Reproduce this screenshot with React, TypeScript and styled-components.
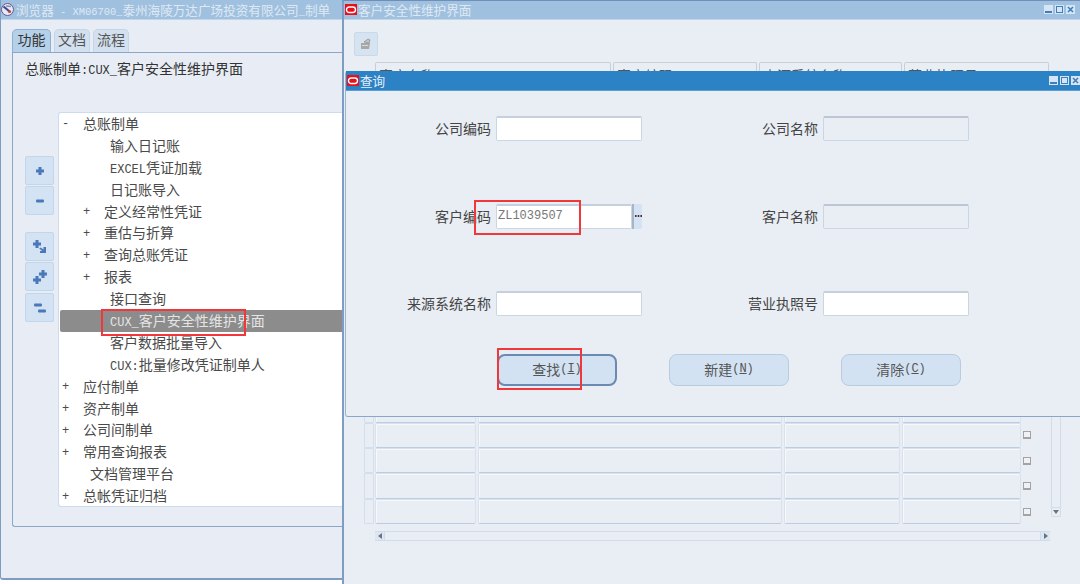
import React from "react";
import styled, { createGlobalStyle } from "styled-components";

const Global = createGlobalStyle`
  html, body { margin: 0; padding: 0; background: #fff; overflow: hidden; }
  * { box-sizing: border-box; }
  body { font-family: "Noto Sans CJK SC", "Liberation Sans", sans-serif; font-size: 14px; color: #444; }
`;

const Desktop = styled.div`
  position: relative;
  width: 1080px;
  height: 584px;
  overflow: hidden;
  background: #fff;
`;

const LatinSpan = styled.span<{ $small?: boolean }>`
  font-family: "Liberation Mono", monospace;
  font-size: ${(p) => (p.$small ? 10.4 : 12)}px;
  line-height: 1;
`;

const Mixed = ({ text, small }: { text: string; small?: boolean }) => (
  <>
    {text.split(/([\x20-\x7e]+)/).map((p, i) =>
      /^[\x20-\x7e]+$/.test(p) ? (
        <LatinSpan key={i} $small={small}>{p}</LatinSpan>
      ) : p ? (
        <span key={i}>{p}</span>
      ) : null
    )}
  </>
);

const LeftWindow = styled.section`
  position: absolute;
  left: 0;
  top: 0;
  width: 344px;
  height: 580px;
  background: #e8edf5;
  border-left: 1px solid #7f9cc3;
  border-bottom: 2px solid #7f9cc3;
  border-bottom-left-radius: 3px;
  display: flex;
  flex-direction: column;
`;

const InactiveBar = styled.header`
  height: 20px;
  flex: none;
  display: flex;
  align-items: center;
  background: #9fc0df;
  border-bottom: 1px solid #c2d6ea;
  color: #dfe9f3;
  font-size: 12.6px;
  line-height: 17px;
  padding-bottom: 1px;
  white-space: nowrap;
`;

const LeftTitle = styled.span`
  margin-left: 2px;
  width: 320px;
`;

const Tabs = styled.nav`
  display: flex;
  gap: 3px;
  margin: 9px 0 0 11px;
  height: 24px;
  flex: none;
`;

const Tab = styled.div<{ $active?: boolean }>`
  width: ${(p) => (p.$active ? 39 : 36)}px;
  padding-bottom: 4px;
  display: flex;
  align-items: center;
  justify-content: center;
  background: ${(p) => (p.$active ? "#b5d0e9" : "#d2e0ef")};
  border: 1px solid ${(p) => (p.$active ? "#8fb0d2" : "#c5d5e6")};
  border-bottom: none;
  border-radius: 5px 5px 0 0;
  color: ${(p) => (p.$active ? "#333" : "#555")};
  line-height: 19px;
`;

const TabPanel = styled.div`
  margin: -1px 0 0 11px;
  height: 475px;
  flex: none;
  border: 1px solid #8ba6c9;
  border-right: none;
  border-radius: 0 0 0 3px;
  padding: 5px 0 0 12px;
`;

const PanelHeading = styled.div`
  height: 20px;
  line-height: 20px;
  color: #333;
`;

const TreeArea = styled.div`
  display: flex;
  margin-top: 34px;
`;

const SideButtons = styled.div`
  width: 33px;
  flex: none;
  padding-top: 44px;
  display: flex;
  flex-direction: column;
  gap: 1px;
`;

const SideButton = styled.div<{ $gapTop?: number }>`
  width: 29px;
  height: 29px;
  margin-top: ${(p) => p.$gapTop ?? 0}px;
  display: flex;
  align-items: center;
  justify-content: center;
  background: #d3e3f3;
  border: 1px solid #c3d5e8;
  border-radius: 2px;
`;

const Tree = styled.div`
  width: 285px;
  height: 395px;
  background: #fff;
  border: 1px solid #ccdcec;
  border-right: none;
  border-radius: 3px 0 0 3px;
`;

const TreeRow = styled.div<{ $selected?: boolean }>`
  height: 21.9px;
  padding-bottom: 2px;
  margin-left: ${(p) => (p.$selected ? 1 : 0)}px;
  display: flex;
  align-items: center;
  white-space: nowrap;
  line-height: 20px;
  background: ${(p) => (p.$selected ? "#8c8c8c" : "transparent")};
  color: ${(p) => (p.$selected ? "#e4e4e4" : "#4a4a4a")};
  border-radius: ${(p) => (p.$selected ? "2px 0 0 2px" : "0")};
`;

const Marker = styled.span<{ $level: number }>`
  width: 21px;
  margin-left: ${(p) => (p.$level === 2 ? 24 : 3)}px;
  padding-top: 3px;
  flex: none;
  font-family: "Liberation Mono", monospace;
  font-size: 12px;
`;

const TreeLabel = styled.span<{ $pad: number }>`
  padding-left: ${(p) => p.$pad}px;
`;

const RightWindow = styled.section`
  position: absolute;
  left: 342px;
  top: 0;
  width: 738px;
  height: 584px;
  background: #e9eef5;
  border-left: 2px solid #7f9cc3;
  border-top: 1px solid #6f8fb8;
  display: flex;
  flex-direction: column;
`;

const RightBar = styled(InactiveBar)`
  height: 19px;
  padding-right: 5px;
`;

const RightTitle = styled.span`
  margin-left: 1px;
  flex: 1;
`;

const WinControls = styled.div<{ $gap: number }>`
  display: flex;
  gap: ${(p) => p.$gap}px;
`;

const WinControl = styled.svg`
  width: 9px;
  height: 9px;
  display: block;
`;

const OracleMark = styled.svg`
  width: 12px;
  height: 11px;
  flex: none;
  display: block;
  margin-left: 1px;
`;

const LogoMark = styled.svg`
  width: 13px;
  height: 13px;
  flex: none;
  display: block;
`;

const Toolbar = styled.div`
  margin: 12px 0 0 10px;
  width: 24px;
  height: 24px;
  flex: none;
  display: flex;
  align-items: center;
  justify-content: center;
  background: #d6e4f2;
  border: 1px solid #c9d9e9;
  border-radius: 2px;
`;

const HeaderRow = styled.div`
  display: flex;
  gap: 2px;
  margin: 6px 0 0 31px;
  height: 30px;
  flex: none;
`;

const HeaderCell = styled.div<{ $w: number }>`
  width: ${(p) => p.$w}px;
  flex: none;
  border: 1px solid #c9cfd8;
  border-bottom: none;
  border-radius: 2px 2px 0 0;
  padding: 2px 0 0 3px;
  line-height: 20px;
  color: #555;
`;

const TableWrap = styled.div`
  display: flex;
  margin-left: 20px;
  margin-top: 0.6px;
  flex: none;
`;

const TableBody = styled.div`
  width: 668px;
  flex: none;
  display: flex;
  flex-direction: column;
`;

const TableRow = styled.div`
  height: 25.4px;
  display: flex;
  gap: 2px;
  align-items: stretch;
`;

const RowSelector = styled.div`
  width: 10px;
  flex: none;
  margin-right: -1px;
  background: #e9eef5;
  border: 1px solid #d3dfec;
  border-radius: 1px;
`;

const DataCell = styled.div<{ $w: number }>`
  width: ${(p) => p.$w}px;
  flex: none;
  background: #e9eef5;
  border: 1px solid #d8e2ee;
  border-bottom: 1px solid #bccde2;
  border-radius: 2px;
  box-shadow: inset 1px 1px 0 #f6f8fb;
`;

const CheckCell = styled.div`
  width: 8px;
  flex: none;
  display: flex;
  align-items: center;
`;

const Check = styled.div`
  width: 8px;
  height: 8px;
  border: 1px solid #a3a3a3;
  border-bottom-width: 2px;
  background: #eef1f6;
`;

const VScroll = styled.div`
  width: 10px;
  margin-left: 19px;
  height: 447px;
  margin-top: -23px;
  border: 1px solid #cfdcea;
  border-top: none;
  border-radius: 10px 10px 5px 5px;
  display: flex;
  flex-direction: column;
  justify-content: flex-end;
  flex: none;
`;

const ScrollEnd = styled.div`
  height: 9px;
  border-top: 1px solid #cfdcea;
  display: flex;
  align-items: center;
  justify-content: center;
  font-size: 0;
`;

const HScroll = styled.div`
  margin: 7px 0 0 31px;
  width: 675px;
  height: 10px;
  flex: none;
  display: flex;
  justify-content: space-between;
  background: #e9eef5;
  border: 1px solid #cfdcea;
  border-left: none;
  border-right: none;
`;

const ArrowBox = styled.div<{ $side: "l" | "r" }>`
  width: 10px;
  display: flex;
  align-items: center;
  justify-content: center;
  background: #dde7f2;
  border-${(p) => (p.$side === "l" ? "right" : "left")}: 1px solid #cfdcea;
`;

const Dialog = styled.section`
  position: absolute;
  left: 345px;
  top: 71px;
  width: 735px;
  height: 346px;
  background: #e9eef5;
  border-left: 1px solid #9db4d2;
  border-bottom: 1px solid #8ba6c9;
  border-radius: 3px 0 0 3px;
  display: flex;
  flex-direction: column;
`;

const DialogBar = styled.header`
  height: 20px;
  flex: none;
  background: #2b82c5;
  border-bottom: 1px solid #5b9cd1;
  display: flex;
  align-items: center;
  color: #e6eff8;
  font-size: 12.6px;
  line-height: 17px;
`;

const DialogTitle = styled.span`
  margin-left: 1px;
  flex: 1;
`;

const Form = styled.div`
  display: grid;
  grid-template-columns: 145px 146px 171px 146px;
  grid-auto-rows: 25px;
  column-gap: 5px;
  row-gap: 62.5px;
  margin-top: 25px;
  align-items: center;
`;

const FormLabel = styled.label`
  text-align: right;
  line-height: 25px;
  color: #444;
  white-space: nowrap;
`;

const Field = styled.div<{ $disabled?: boolean }>`
  height: 25px;
  background: ${(p) => (p.$disabled ? "#e9eef5" : "#fff")};
  border: 1px solid #c8d6e6;
  border-top: 2px solid ${(p) => (p.$disabled ? "#bcc6d4" : "#c6cfdc")};
  border-radius: 2px;
  padding-left: 1px;
  line-height: 20px;
  color: #777;
  display: flex;
  align-items: center;
`;

const FieldText = styled.span`
  font-family: "Liberation Mono", monospace;
  font-size: 12px;
  margin-top: -2px;
`;

const LovGroup = styled.div`
  display: flex;
`;

const LovField = styled(Field)`
  width: 136px;
`;

const LovButton = styled.div`
  width: 10px;
  height: 25px;
  background: #d3e3f3;
  border-left: 2px solid #aab5c4;
  border-radius: 0 2px 2px 0;
  display: flex;
  align-items: center;
  justify-content: center;
`;

const ButtonRow = styled.div`
  display: flex;
  gap: 52px;
  margin: 38px 0 0 151px;
`;

const ActionButton = styled.div<{ $default?: boolean }>`
  width: 120px;
  height: 32px;
  padding-bottom: 3px;
  display: flex;
  align-items: center;
  justify-content: center;
  background: #d2e2f2;
  border: ${(p) => (p.$default ? "2px solid #6b8ab2" : "1px solid #b9cbe0")};
  border-radius: 8px;
  color: #555;
  white-space: nowrap;
`;

const Underlined = styled.span`
  text-decoration: underline;
  font-family: "Liberation Mono", monospace;
  font-size: 12px;
`;

const Callout = styled.div<{ $x: number; $y: number; $w: number; $h: number }>`
  position: absolute;
  left: ${(p) => p.$x}px;
  top: ${(p) => p.$y}px;
  width: ${(p) => p.$w}px;
  height: ${(p) => p.$h}px;
  border: 2px solid #f0383c;
  pointer-events: none;
`;

const Oracle = ({ color }: { color: string }) => (
  <OracleMark viewBox="0 0 12 11">
    <rect width="12" height="11" fill={color} />
    <rect x="1.5" y="3" width="9" height="5.5" rx="2.7" fill="none" stroke="#fff" strokeWidth="1.4" />
  </OracleMark>
);

const AppLogo = () => (
  <LogoMark viewBox="0 0 13 13">
    <circle cx="6.5" cy="6.5" r="6" fill="#e9e8f2" stroke="#5f5a98" strokeWidth="1" />
    <path d="M2.5 3.5 L8 8" stroke="#3d4a8f" strokeWidth="2.2" />
    <path d="M5 3 L10 3.5" stroke="#8d86bb" strokeWidth="1.5" />
    <circle cx="8.5" cy="8.5" r="1.6" fill="#b8443c" />
  </LogoMark>
);

const Controls = ({ gap }: { gap: number }) => (
  <WinControls $gap={gap}>
    <WinControl viewBox="0 0 9 9">
      <rect width="9" height="9" fill="#d5e5f5" />
      <rect x="1" y="6" width="7" height="2" fill="#3f7fb8" />
    </WinControl>
    <WinControl viewBox="0 0 9 9">
      <rect width="9" height="9" fill="#d5e5f5" />
      <rect x="1.5" y="1.5" width="6" height="6" fill="none" stroke="#3f7fb8" />
    </WinControl>
    <WinControl viewBox="0 0 9 9">
      <rect width="9" height="9" fill="#d5e5f5" />
      <path d="M2 2 L7 7 M7 2 L2 7" stroke="#3f7fb8" strokeWidth="1.6" />
    </WinControl>
  </WinControls>
);

const blue = "#4a78b8";
const Plus = ({ x, y }: { x: number; y: number }) => (
  <path d={`M${x - 1.5} ${y - 4}h3v2.5h2.5v3h-2.5v2.5h-3v-2.5h-2.5v-3h2.5z`} fill={blue} />
);
const Minus = ({ x, y }: { x: number; y: number }) => (
  <rect x={x - 4} y={y - 1.5} width={8} height={3} rx={1} fill={blue} />
);

const Glyph = ({ children }: { children: React.ReactNode }) => (
  <svg width="16" height="16" viewBox="0 0 16 16">{children}</svg>
);

type Node = { t: string; level: 0 | 1 | 2 | 3; mark?: string; pad?: number; selected?: boolean };
const tree: Node[] = [
  { t: "总账制单", level: 0, mark: "-" },
  { t: "输入日记账", level: 2, pad: 7 },
  { t: "EXCEL凭证加载", level: 2, pad: 7 },
  { t: "日记账导入", level: 2, pad: 7 },
  { t: "定义经常性凭证", level: 1, mark: "+" },
  { t: "重估与折算", level: 1, mark: "+" },
  { t: "查询总账凭证", level: 1, mark: "+" },
  { t: "报表", level: 1, mark: "+" },
  { t: "接口查询", level: 2, pad: 7 },
  { t: "CUX_客户安全性维护界面", level: 2, pad: 7, selected: true },
  { t: "客户数据批量导入", level: 2, pad: 7 },
  { t: "CUX:批量修改凭证制单人", level: 2, pad: 7 },
  { t: "应付制单", level: 0, mark: "+" },
  { t: "资产制单", level: 0, mark: "+" },
  { t: "公司间制单", level: 0, mark: "+" },
  { t: "常用查询报表", level: 0, mark: "+" },
  { t: "文档管理平台", level: 3 },
  { t: "总帐凭证归档", level: 0, mark: "+" },
];

const rows = Array.from({ length: 17 }, (_, i) => i);

export default function App() {
  return (
    <Desktop>
      <Global />
      <LeftWindow>
        <InactiveBar>
          <AppLogo />
          <LeftTitle>
            <Mixed small text="浏览器 - XM06700_泰州海陵万达广场投资有限公司_制单" />
          </LeftTitle>
        </InactiveBar>
        <Tabs>
          <Tab $active>功能</Tab>
          <Tab>文档</Tab>
          <Tab>流程</Tab>
        </Tabs>
        <TabPanel>
          <PanelHeading>
            <Mixed text="总账制单:CUX_客户安全性维护界面" />
          </PanelHeading>
          <TreeArea>
            <SideButtons>
              <SideButton>
                <Glyph><Plus x={8} y={8} /></Glyph>
              </SideButton>
              <SideButton>
                <Glyph><Minus x={8} y={8} /></Glyph>
              </SideButton>
              <SideButton $gapTop={16}>
                <Glyph>
                  <Plus x={5} y={5} />
                  <path d="M8.5 8.5l3 2v-2.5h2.5v6h-6v-2l2.2 0-3-2.5z" fill={blue} />
                </Glyph>
              </SideButton>
              <SideButton>
                <Glyph>
                  <Plus x={5} y={11} />
                  <Plus x={11} y={5} />
                </Glyph>
              </SideButton>
              <SideButton $gapTop={1}>
                <Glyph>
                  <Minus x={6} y={5} />
                  <Minus x={10} y={11} />
                </Glyph>
              </SideButton>
            </SideButtons>
            <Tree>
              {tree.map((n) => (
                <TreeRow key={n.t} $selected={n.selected}>
                  {n.level === 3 ? (
                    <TreeLabel $pad={31}>
                      <Mixed text={n.t} />
                    </TreeLabel>
                  ) : n.level === 2 ? (
                    <TreeLabel $pad={44 + (n.pad ?? 0) - (n.selected ? 1 : 0)}>
                      <Mixed text={n.t} />
                    </TreeLabel>
                  ) : (
                    <>
                      <Marker $level={n.level === 1 ? 2 : 0}>{n.mark}</Marker>
                      <TreeLabel $pad={0}>
                        <Mixed text={n.t} />
                      </TreeLabel>
                    </>
                  )}
                </TreeRow>
              ))}
            </Tree>
          </TreeArea>
        </TabPanel>
      </LeftWindow>

      <RightWindow>
        <RightBar>
          <Oracle color="#e8101a" />
          <RightTitle>客户安全性维护界面</RightTitle>
          <Controls gap={2} />
        </RightBar>
        <Toolbar>
          <svg width="12" height="12" viewBox="0 0 12 12">
            <path d="M1 5h9l-1 6H1z" fill="#a8a8a8" />
            <path d="M2 7.5h6" stroke="#d8d8d8" />
            <path d="M4 4l4-3 2 1-1 3z" fill="#c4c4c4" stroke="#8a8a8a" strokeWidth="0.7" />
          </svg>
        </Toolbar>
        <HeaderRow>
          <HeaderCell $w={236}>客户名称</HeaderCell>
          <HeaderCell $w={144}>客户编码</HeaderCell>
          <HeaderCell $w={143}>来源系统名称</HeaderCell>
          <HeaderCell $w={145}>营业执照号</HeaderCell>
        </HeaderRow>
        <TableWrap>
          <TableBody>
            {rows.map((r) => (
              <TableRow key={r}>
                <RowSelector />
                <DataCell $w={101} />
                <DataCell $w={304} />
                <DataCell $w={116} />
                <DataCell $w={119} />
                <CheckCell>
                  <Check />
                </CheckCell>
              </TableRow>
            ))}
          </TableBody>
          <VScroll>
            <ScrollEnd>
              <svg width="6" height="4" viewBox="0 0 6 4">
                <path d="M0 0h6L3 4z" fill="#6b7280" />
              </svg>
            </ScrollEnd>
          </VScroll>
        </TableWrap>
        <HScroll>
          <ArrowBox $side="l">
            <svg width="4" height="6" viewBox="0 0 4 6">
              <path d="M4 0v6L0 3z" fill="#6b7280" />
            </svg>
          </ArrowBox>
          <ArrowBox $side="r">
            <svg width="4" height="6" viewBox="0 0 4 6">
              <path d="M0 0v6l4-3z" fill="#6b7280" />
            </svg>
          </ArrowBox>
        </HScroll>
      </RightWindow>

      <Dialog>
        <DialogBar>
          <Oracle color="#e8101a" />
          <DialogTitle>查询</DialogTitle>
          <Controls gap={2} />
        </DialogBar>
        <Form>
          <FormLabel>公司编码</FormLabel>
          <Field />
          <FormLabel>公司名称</FormLabel>
          <Field $disabled />
          <FormLabel>客户编码</FormLabel>
          <LovGroup>
            <LovField>
              <FieldText>ZL1039507</FieldText>
            </LovField>
            <LovButton>
              <svg width="7" height="2" viewBox="0 0 7 2">
                <path d="M0 0h1.6v2H0zM2.7 0h1.6v2H2.7zM5.4 0H7v2H5.4z" fill="#4a2f33" />
              </svg>
            </LovButton>
          </LovGroup>
          <FormLabel>客户名称</FormLabel>
          <Field $disabled />
          <FormLabel>来源系统名称</FormLabel>
          <Field />
          <FormLabel>营业执照号</FormLabel>
          <Field />
        </Form>
        <ButtonRow>
          <ActionButton $default>
            查找<LatinSpan>(</LatinSpan><Underlined>I</Underlined><LatinSpan>)</LatinSpan>
          </ActionButton>
          <ActionButton>
            新建<LatinSpan>(</LatinSpan><Underlined>N</Underlined><LatinSpan>)</LatinSpan>
          </ActionButton>
          <ActionButton>
            清除<LatinSpan>(</LatinSpan><Underlined>C</Underlined><LatinSpan>)</LatinSpan>
          </ActionButton>
        </ButtonRow>
      </Dialog>

      <Callout $x={474} $y={200} $w={107} $h={35} />
      <Callout $x={101} $y={309} $w={145} $h={27} />
      <Callout $x={497} $y={348} $w={85} $h={42} />
    </Desktop>
  );
}
